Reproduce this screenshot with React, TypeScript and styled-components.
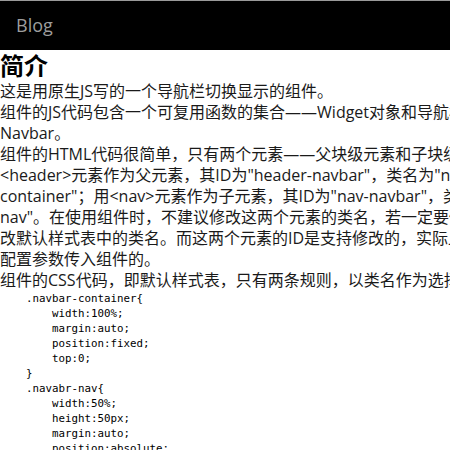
import React from "react";
import styled, { createGlobalStyle } from "styled-components";

const Global = createGlobalStyle`
  html, body { margin: 0; padding: 0; background: #fff; overflow: hidden; }
  body { font-family: "Open Sans", "Noto Sans CJK SC", sans-serif; color: #1a1a1a; }
`;

const Header = styled.header`
  height: 49px;
  border-top: 1px solid #9a9a9a;
  background: #000;
  display: flex;
  align-items: center;
`;

const Brand = styled.a`
  padding-left: 16px;
  font-size: 18px;
  line-height: 49px;
  color: #9d9d9d;
  text-decoration: none;
`;

const Article = styled.main`
  width: 570px;
`;

const Title = styled.h1`
  margin: 0;
  font-size: 24px;
  line-height: 31px;
  font-weight: 700;
  color: #000;
`;

const Para = styled.p`
  margin: 0;
  font-size: 16px;
  line-height: 21px;
`;

const Code = styled.pre`
  margin: 0;
  font-family: "DejaVu Sans Mono", monospace;
  font-size: 10.8px;
  line-height: 15px;
  color: #000;
`;

const code = `    .navbar-container{
        width:100%;
        margin:auto;
        position:fixed;
        top:0;
    }
    .navabr-nav{
        width:50%;
        height:50px;
        margin:auto;
        position:absolute;
        left:0;
        right:0;
    }`;

export default function App() {
  return (
    <>
      <Global />
      <Header>
        <Brand href="#">Blog</Brand>
      </Header>
      <Article>
        <Title>简介</Title>
        <Para>这是用原生JS写的一个导航栏切换显示的组件。</Para>
        <Para>组件的JS代码包含一个可复用函数的集合——Widget对象和导航栏对象 Navbar。</Para>
        <Para>
          组件的HTML代码很简单，只有两个元素——父块级元素和子块级元素：用&lt;header&gt;元素作为父元素，其ID为"header-navbar"，类名为"navbar-container"；用&lt;nav&gt;元素作为子元素，其ID为"nav-navbar"，类名为"navbar-nav"。在使用组件时，不建议修改这两个元素的类名，若一定要修改，请同时修改默认样式表中的类名。而这两个元素的ID是支持修改的，实际上是由用户通过配置参数传入组件的。
        </Para>
        <Para>组件的CSS代码，即默认样式表，只有两条规则，以类名作为选择器：</Para>
        <Code>{code}</Code>
      </Article>
    </>
  );
}
